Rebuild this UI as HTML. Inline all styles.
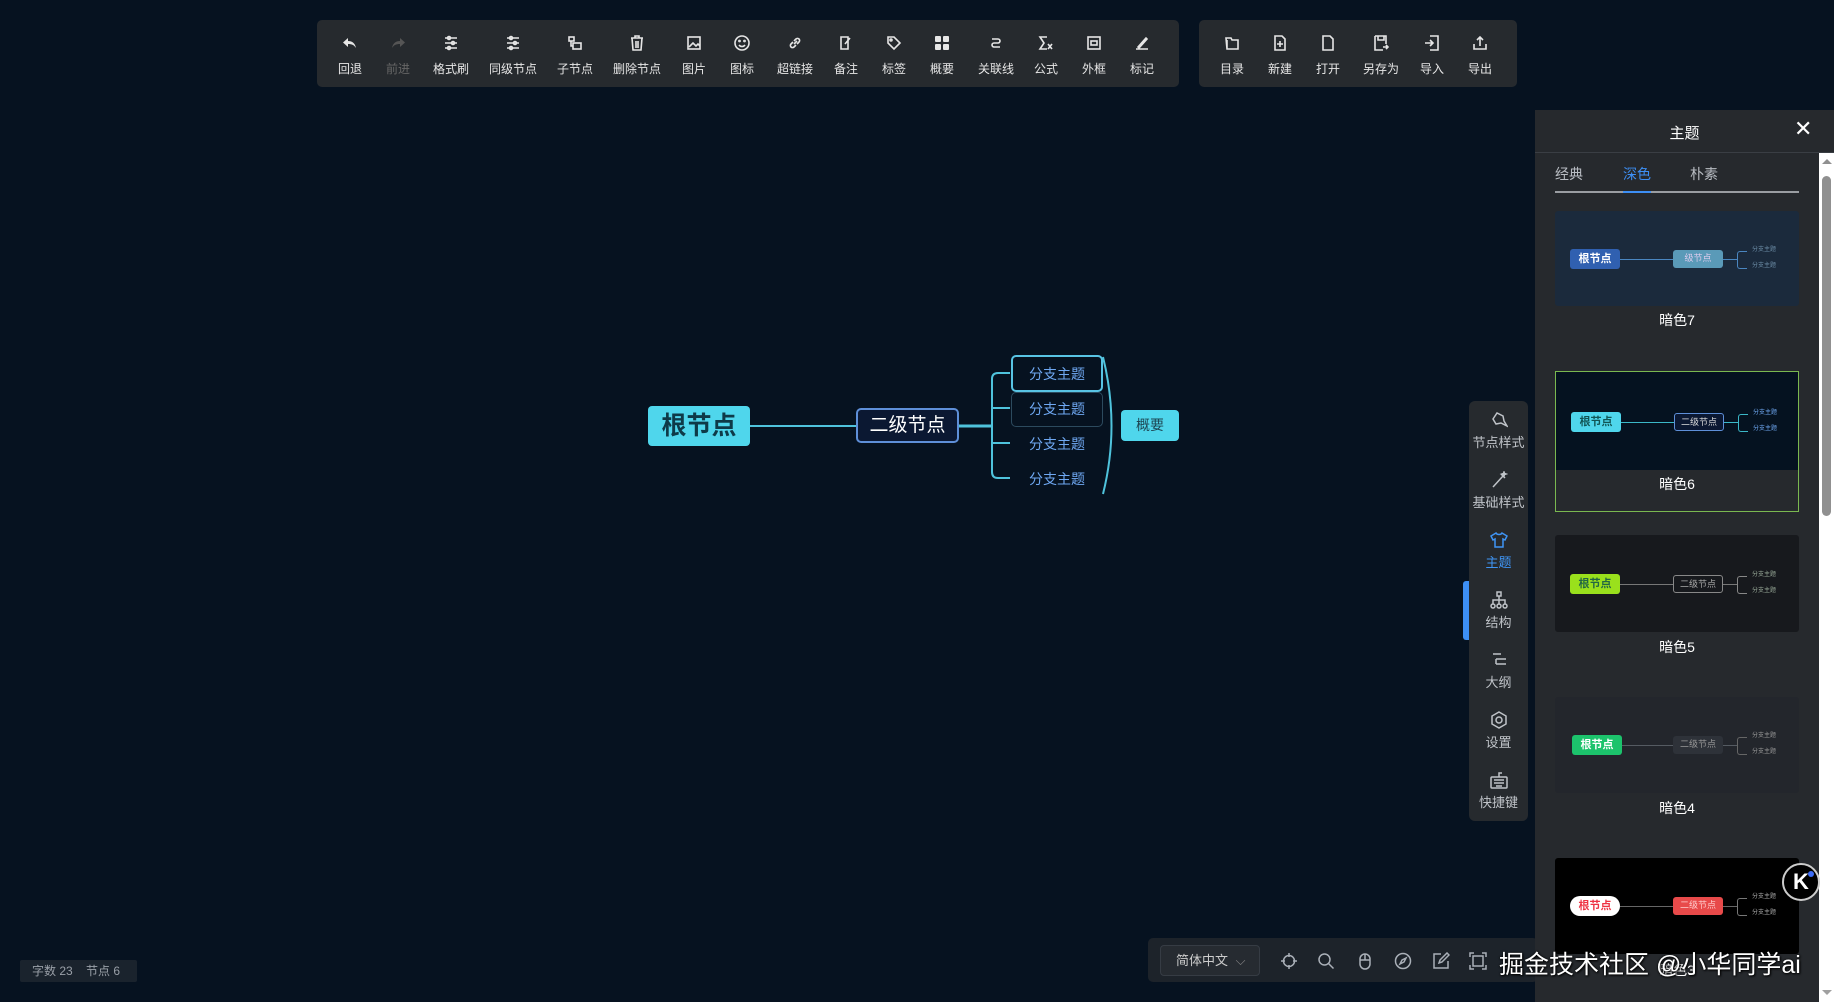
<!DOCTYPE html>
<html><head><meta charset="utf-8"><style>
*{margin:0;padding:0;box-sizing:border-box}
body{width:1834px;height:1002px;overflow:hidden;background:#061220;font-family:"Liberation Sans","Noto Sans CJK SC",sans-serif;position:relative;color:#fff}
.abs{position:absolute}
.tb{position:absolute;background:#262a2e;border-radius:5px}
.it{position:absolute;top:0;width:60px;margin-left:-30px;text-align:center;color:#e6e6e6;font-size:12px}
.it svg{position:absolute;left:22px;top:15px;width:16px;height:16px;fill:none;stroke:#e6e6e6;stroke-width:1.6}
.it span{position:absolute;left:0;right:0;top:40px}
.side{position:absolute;left:1469px;top:401px;width:59px;height:420px;background:#262a2e;border-radius:6px}
.si{position:absolute;left:0;width:59px;text-align:center;font-size:13px;color:#bfc3c8}
.si svg{display:block;margin:0 auto 3px;width:18px;height:18px;fill:none;stroke:#bfc3c8;stroke-width:1.5}
.card{position:absolute;left:1555px;width:244px}
.pv{position:absolute;left:0;width:244px;border-radius:3px}
.lbl{position:absolute;left:0;width:244px;text-align:center;font-size:14px;color:#fff}
.r{position:absolute;left:15px;width:50px;height:20px;border-radius:3px;font-size:11px;font-weight:bold;text-align:center;line-height:20px}
.s{position:absolute;left:118px;width:50px;height:18px;border-radius:3px;font-size:9px;text-align:center;line-height:17px}
.ln{position:absolute;left:65px;width:53px;height:1px}
.ln2{position:absolute;left:168px;width:14px;height:1px}
.br{position:absolute;left:182px;width:10px;height:18px;border:1px solid;border-right:none;border-radius:3px 0 0 3px}
.tt{position:absolute;left:197px;font-size:6px;line-height:8px}
.bi{position:absolute;top:952px;width:18px;height:18px;fill:none;stroke:#aab0b8;stroke-width:1.5}
</style></head><body>

<!-- toolbar 1 -->
<div class="tb" style="left:317px;top:20px;width:862px;height:67px">
<div class="it" style="left:33px"><svg viewBox="0 0 16 16" style="fill:#e6e6e6;stroke:none"><path d="M6 3 L1 7.5 L6 12 V9 C10 9 12 10 14 13 C13 8 10 6 6 6Z"/></svg><span>回退</span></div>
<div class="it" style="left:81px;color:#666"><svg viewBox="0 0 16 16" style="fill:#555;stroke:none"><path d="M10 3 L15 7.5 L10 12 V9 C6 9 4 10 2 13 C3 8 6 6 10 6Z"/></svg><span>前进</span></div>
<div class="it" style="left:134px"><svg viewBox="0 0 16 16"><path d="M2 3h12M2 8h12M2 13h12"/><circle cx="6" cy="3" r="1.5"/><circle cx="10" cy="8" r="1.5"/><circle cx="6" cy="13" r="1.5"/></svg><span>格式刷</span></div>
<div class="it" style="left:196px"><svg viewBox="0 0 16 16"><path d="M2 3h12M2 8h12M2 13h12"/><circle cx="6" cy="3" r="1.5"/><circle cx="10" cy="8" r="1.5"/><circle cx="6" cy="13" r="1.5"/></svg><span>同级节点</span></div>
<div class="it" style="left:258px"><svg viewBox="0 0 16 16"><rect x="2" y="2" width="5" height="4"/><rect x="6" y="8" width="8" height="6"/><path d="M4 6v5h2"/></svg><span>子节点</span></div>
<div class="it" style="left:320px"><svg viewBox="0 0 16 16"><path d="M2 3h12M6 3V1h4v2M3 3l1 12h8l1-12M7 6v7M9 6v7"/></svg><span>删除节点</span></div>
<div class="it" style="left:377px"><svg viewBox="0 0 16 16"><rect x="2" y="2" width="12" height="12"/><path d="M3 12l4-4 3 3 2-2 2 2" /></svg><span>图片</span></div>
<div class="it" style="left:425px"><svg viewBox="0 0 16 16"><circle cx="8" cy="8" r="7"/><circle cx="5.5" cy="6" r=".6"/><circle cx="10.5" cy="6" r=".6"/><path d="M5 10c1.5 2 4.5 2 6 0"/></svg><span>图标</span></div>
<div class="it" style="left:478px"><svg viewBox="0 0 16 16"><path d="M7 9l3-3M6 7L4 9a2 2 0 003 3l2-2M10 9l2-2a2 2 0 00-3-3L7 6"/></svg><span>超链接</span></div>
<div class="it" style="left:529px"><svg viewBox="0 0 16 16"><path d="M3 2h7v12H3z M7 9l5-6"/></svg><span>备注</span></div>
<div class="it" style="left:577px"><svg viewBox="0 0 16 16"><path d="M2 2h6l6 6-6 6-6-6z"/><circle cx="5" cy="5" r="1"/></svg><span>标签</span></div>
<div class="it" style="left:625px"><svg viewBox="0 0 16 16" style="fill:#e6e6e6;stroke:none"><rect x="1" y="1" width="6" height="6" rx="1"/><rect x="9" y="1" width="6" height="6" rx="1"/><rect x="1" y="9" width="6" height="6" rx="1"/><rect x="9" y="9" width="6" height="6" rx="1"/></svg><span>概要</span></div>
<div class="it" style="left:679px"><svg viewBox="0 0 16 16"><path d="M4 4h6a2 2 0 010 4H6a2 2 0 000 4h6"/></svg><span>关联线</span></div>
<div class="it" style="left:729px"><svg viewBox="0 0 16 16"><path d="M9 2H2l4 6-4 6h7M10 9l4 5M14 9l-4 5"/></svg><span>公式</span></div>
<div class="it" style="left:777px"><svg viewBox="0 0 16 16"><rect x="2" y="2" width="12" height="12"/><rect x="5" y="6" width="6" height="4"/></svg><span>外框</span></div>
<div class="it" style="left:825px"><svg viewBox="0 0 16 16"><path d="M4 12l8-9 1 1-8 9zM2 14h12"/></svg><span>标记</span></div>
</div>

<!-- toolbar 2 -->
<div class="tb" style="left:1199px;top:20px;width:318px;height:67px">
<div class="it" style="left:33px"><svg viewBox="0 0 16 16"><path d="M2 3h5l1 2h6v9H3z M3 5v9"/></svg><span>目录</span></div>
<div class="it" style="left:81px"><svg viewBox="0 0 16 16"><path d="M3 1h7l3 3v11H3z M8 6v6M5 9h6"/></svg><span>新建</span></div>
<div class="it" style="left:129px"><svg viewBox="0 0 16 16"><path d="M3 1h7l3 3v11H3z"/></svg><span>打开</span></div>
<div class="it" style="left:182px"><svg viewBox="0 0 16 16"><path d="M2 1h11v8M2 1v14h8M5 1v4h6V1M10 12h5M13 10l2 2-2 2"/></svg><span>另存为</span></div>
<div class="it" style="left:233px"><svg viewBox="0 0 16 16"><path d="M6 1h8v14H6M1 8h8M6 5l3 3-3 3"/></svg><span>导入</span></div>
<div class="it" style="left:281px"><svg viewBox="0 0 16 16"><path d="M2 9v5h12V9M8 2v9M5 5l3-3 3 3"/></svg><span>导出</span></div>
</div>

<!-- mind map -->
<svg class="abs" style="left:0;top:0" width="1834" height="1002" fill="none">
<path d="M750 426H856" stroke="#4fc3dc" stroke-width="2"/>
<path d="M959 426H992" stroke="#4fc3dc" stroke-width="3"/>
<path d="M1010 373H998q-6 0-6 6V472q0 6 6 6H1010M992 408H1010M992 443H1010" stroke="#4fc3dc" stroke-width="2"/>
<path d="M1103 357Q1120 426 1103 494" stroke="#4fc3dc" stroke-width="2"/>
</svg>
<div class="abs" style="left:648px;top:406px;width:102px;height:40px;background:#4fd6ec;border-radius:4px;color:#0e3a48;font-weight:bold;font-size:25px;text-align:center;line-height:40px">根节点</div>
<div class="abs" style="left:856px;top:408px;width:103px;height:35px;background:#0b1832;border:2px solid #5e8fd8;border-radius:5px;color:#fff;font-size:19px;text-align:center;line-height:31px">二级节点</div>
<div class="abs" style="left:1011px;top:355px;width:92px;height:37px;border:2px solid #58c4e4;border-radius:5px"></div>
<div class="abs" style="left:1011px;top:392px;width:92px;height:35px;border:1px solid #2c4a5e;border-radius:5px"></div>
<div class="abs" style="left:1012px;top:364px;width:90px;text-align:center;color:#6fa8f2;font-size:14px">分支主题</div>
<div class="abs" style="left:1012px;top:399px;width:90px;text-align:center;color:#6fa8f2;font-size:14px">分支主题</div>
<div class="abs" style="left:1012px;top:434px;width:90px;text-align:center;color:#6fa8f2;font-size:14px">分支主题</div>
<div class="abs" style="left:1012px;top:469px;width:90px;text-align:center;color:#6fa8f2;font-size:14px">分支主题</div>
<div class="abs" style="left:1121px;top:410px;width:58px;height:31px;background:#4fd6ec;border-radius:4px;color:#1d4552;font-size:14px;text-align:center;line-height:31px">概要</div>

<!-- bottom left -->
<div class="abs" style="left:20px;top:960px;width:117px;height:22px;background:#1a232d;border-radius:2px;color:#9aa0a8;font-size:12px;line-height:22px;padding-left:12px">字数 23&nbsp;&nbsp;&nbsp;&nbsp;节点 6</div>

<!-- bottom toolbar -->
<div class="abs" style="left:1148px;top:938px;width:390px;height:44px;background:#1d232a;border-radius:5px"></div>
<div class="abs" style="left:1160px;top:945px;width:100px;height:31px;background:#262b31;border:1px solid #363c44;border-radius:4px;color:#ccc;font-size:13px;line-height:29px;padding-left:15px">简体中文 <span style="color:#888;margin-left:4px">⌵</span></div>
<svg class="bi" style="left:1280px" viewBox="0 0 18 18"><circle cx="9" cy="9" r="5.5"/><path d="M9 1v4M9 13v4M1 9h4M13 9h4"/></svg>
<svg class="bi" style="left:1317px" viewBox="0 0 18 18"><circle cx="7.5" cy="7.5" r="5.5"/><path d="M11.5 11.5l5 5"/></svg>
<svg class="bi" style="left:1356px" viewBox="0 0 18 18"><rect x="4" y="2" width="10" height="15" rx="5"/><path d="M9 2v6M4 8h10"/></svg>
<svg class="bi" style="left:1394px" viewBox="0 0 18 18"><circle cx="9" cy="9" r="7.5"/><path d="M12 6l-2 4-4 2 2-4z"/></svg>
<svg class="bi" style="left:1432px" viewBox="0 0 18 18"><path d="M9 2H2v14h14V9M7 11l1-3 7-7 2 2-7 7z"/></svg>
<svg class="bi" style="left:1469px" viewBox="0 0 18 18"><path d="M1 5V1h4M13 1h4v4M17 13v4h-4M5 17H1v-4"/><rect x="4" y="4" width="10" height="10"/></svg>

<!-- side toolbar -->
<div class="abs" style="left:1463px;top:581px;width:6px;height:59px;background:#3d8ff5;border-radius:3px 0 0 3px"></div>
<div class="side">
<div class="si" style="top:10px"><svg viewBox="0 0 18 18"><path d="M3 8l4-6 6 3 1 5 3 5-6-3-5 1z"/></svg>节点样式</div>
<div class="si" style="top:70px"><svg viewBox="0 0 18 18"><path d="M3 16L13 5M11 3l4 4"/><path d="M14 1l.5 1.5L16 3l-1.5.5L14 5l-.5-1.5L12 3l1.5-.5z" fill="#bfc3c8"/></svg>基础样式</div>
<div class="si" style="top:130px;color:#3f95f5"><svg viewBox="0 0 18 18" style="stroke:#3f95f5"><path d="M6 2L1 5l2 4 2-1v8h8V8l2 1 2-4-5-3c-1 2-5 2-6 0z"/></svg>主题</div>
<div class="si" style="top:190px"><svg viewBox="0 0 18 18"><rect x="7" y="1" width="4" height="4"/><path d="M9 5v4M3 13V9h12v4M9 9v4"/><circle cx="3" cy="15" r="2"/><circle cx="9" cy="15" r="2"/><circle cx="15" cy="15" r="2"/></svg>结构</div>
<div class="si" style="top:250px"><svg viewBox="0 0 18 18"><path d="M3 3h8M6 8h10M6 13h10M6 8v5"/></svg>大纲</div>
<div class="si" style="top:310px"><svg viewBox="0 0 18 18"><path d="M9 1l7 4v8l-7 4-7-4V5z"/><circle cx="9" cy="9" r="3"/></svg>设置</div>
<div class="si" style="top:370px"><svg viewBox="0 0 18 18"><rect x="1" y="6" width="16" height="11" rx="1"/><path d="M9 6V2h3M4 9h10M4 12h10M6 15h6"/></svg>快捷键</div>
</div>

<!-- right panel -->
<div class="abs" style="left:1535px;top:110px;width:299px;height:892px;background:#26292d"></div>
<div class="abs" style="left:1535px;top:152px;width:299px;height:1px;background:#3a3e44"></div>
<div class="abs" style="left:1535px;top:122px;width:299px;text-align:center;font-size:15px;color:#fff;padding-left:0">主题</div>
<div class="abs" style="left:1794px;top:118px;font-size:22px;color:#fff;line-height:22px">✕</div>
<div class="abs" style="left:1555px;top:164px;font-size:14px;color:#b8bcc2">经典</div>
<div class="abs" style="left:1623px;top:164px;font-size:14px;color:#3d8ff5">深色</div>
<div class="abs" style="left:1690px;top:164px;font-size:14px;color:#b8bcc2">朴素</div>
<div class="abs" style="left:1555px;top:191px;width:244px;height:2px;background:#9a9da2"></div>
<div class="abs" style="left:1623px;top:191px;width:28px;height:2px;background:#3d8ff5"></div>
<!-- scrollbar -->
<div class="abs" style="left:1819px;top:153px;width:15px;height:849px;background:#fff"></div>
<div class="abs" style="left:1822px;top:176px;width:9px;height:340px;background:#909090;border-radius:5px"></div>
<div class="abs" style="left:1822px;top:159px;width:0;height:0;border:5px solid transparent;border-bottom-color:#909090;border-top:none"></div>
<div class="abs" style="left:1822px;top:990px;width:0;height:0;border:5px solid transparent;border-top-color:#a0a0a0;border-bottom:none"></div>

<!-- card 7 -->
<div class="card" style="top:211px"><div class="pv" style="top:0;height:95px;background:#1b2a3c">
<div class="r" style="top:38px;background:#3060b0;color:#fff">根节点</div><div class="ln" style="top:48px;background:#4a86c0"></div>
<div class="s" style="top:39px;background:#5a9ab8;color:#dce">级节点</div><div class="ln2" style="top:48px;background:#4a86c0"></div>
<div class="br" style="top:40px;border-color:#4a86c0"></div><div class="tt" style="top:35px;color:#6d8ea8">分支主题<br><br>分支主题</div></div>
<div class="lbl" style="top:99px">暗色7</div></div>

<!-- card 6 -->
<div class="card" style="top:371px;height:141px;border:1px solid #7ab850">
<div class="pv" style="top:0;left:0;width:242px;height:98px;background:#051220;border-radius:0">
<div class="r" style="top:40px;background:#4fd6ec;color:#155">根节点</div><div class="ln" style="top:50px;background:#3bb8c8"></div>
<div class="s" style="top:41px;background:#0b1832;border:1px solid #5e8fd8;color:#ddd">二级节点</div><div class="ln2" style="top:50px;background:#3bb8c8"></div>
<div class="br" style="top:42px;border-color:#3bb8c8"></div><div class="tt" style="top:37px;color:#6fa8f2">分支主题<br><br>分支主题</div></div>
<div class="lbl" style="top:102px;width:242px">暗色6</div></div>

<!-- card 5 -->
<div class="card" style="top:535px"><div class="pv" style="top:0;height:97px;background:#17191d">
<div class="r" style="top:39px;background:#9ae01c;color:#264">根节点</div><div class="ln" style="top:49px;background:#777"></div>
<div class="s" style="top:40px;border:1px solid #888;color:#aaa">二级节点</div><div class="ln2" style="top:49px;background:#777"></div>
<div class="br" style="top:41px;border-color:#888"></div><div class="tt" style="top:36px;color:#9a9">分支主题<br><br>分支主题</div></div>
<div class="lbl" style="top:102px">暗色5</div></div>

<!-- card 4 -->
<div class="card" style="top:697px"><div class="pv" style="top:0;height:96px;background:#23262c">
<div class="r" style="top:38px;left:17px;background:#1cc36c;color:#fff">根节点</div><div class="ln" style="top:48px;left:67px;background:#555b62"></div>
<div class="s" style="top:39px;background:#2e3239;color:#999">二级节点</div><div class="ln2" style="top:48px;background:#555b62"></div>
<div class="br" style="top:40px;border-color:#666"></div><div class="tt" style="top:35px;color:#999">分支主题<br><br>分支主题</div></div>
<div class="lbl" style="top:101px">暗色4</div></div>

<!-- card 3 -->
<div class="card" style="top:858px"><div class="pv" style="top:0;height:96px;background:#000">
<div class="r" style="top:38px;background:#fff;color:#e34;border-radius:10px">根节点</div><div class="ln" style="top:48px;background:#666"></div>
<div class="s" style="top:39px;background:#e84a4a;color:#fcc">二级节点</div><div class="ln2" style="top:48px;background:#666"></div>
<div class="br" style="top:40px;border-color:#777"></div><div class="tt" style="top:35px;color:#aaa">分支主题<br><br>分支主题</div></div>
<div class="lbl" style="top:102px">暗色3</div></div>

<!-- K badge -->
<div class="abs" style="left:1782px;top:863px;width:38px;height:38px;border-radius:50%;background:#000;border:2px solid #ccc;color:#fff;font-weight:bold;font-size:22px;text-align:center;line-height:34px">K</div>
<div class="abs" style="left:1808px;top:871px;width:6px;height:6px;border-radius:50%;background:#3d6cf5"></div>

<!-- watermark -->
<div class="abs" style="left:1499px;top:945px;font-size:25px;color:#fff;white-space:nowrap;text-shadow:0 0 2px #000,1px 1px 2px #000">掘金技术社区 @小华同学ai</div>
</body></html>
